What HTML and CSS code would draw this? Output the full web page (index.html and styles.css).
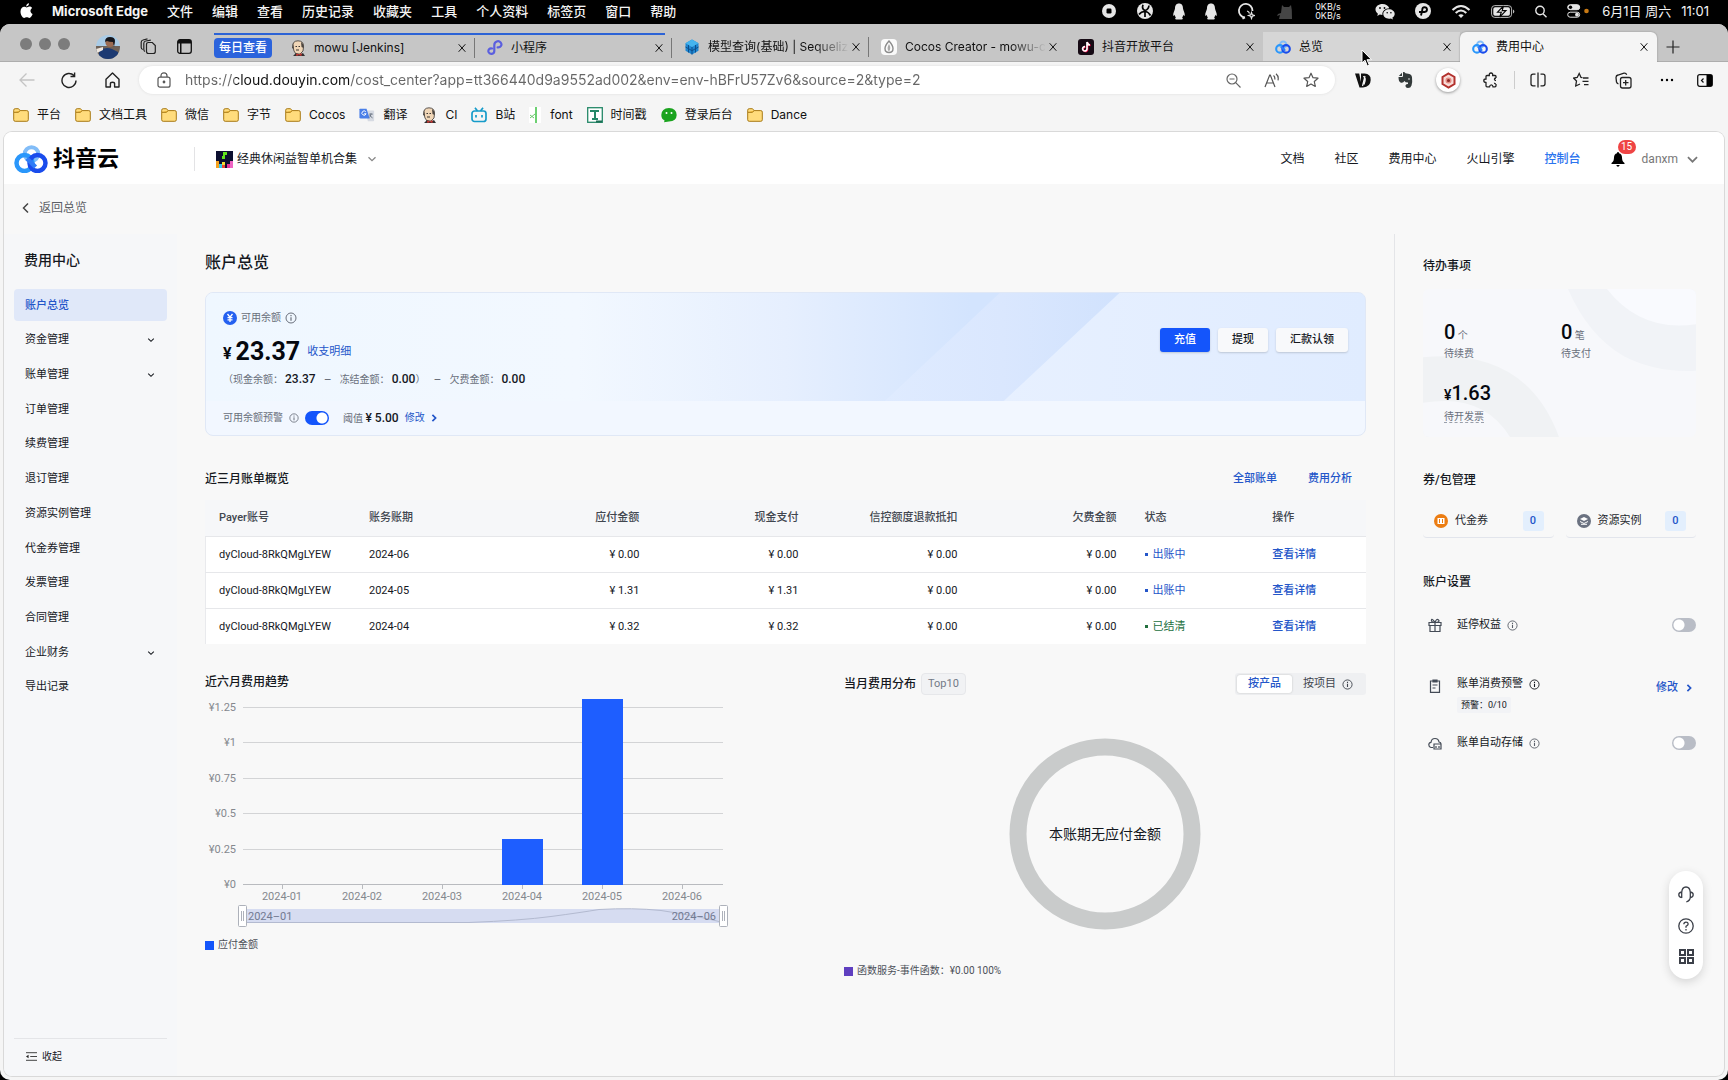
FILE: index.html
```html
<!DOCTYPE html>
<html lang="zh-CN">
<head>
<meta charset="utf-8">
<title>费用中心</title>
<link rel="stylesheet" href="styles.css">
</head>
<body>
<svg class="sprite" aria-hidden="true">
  <symbol id="close" viewBox="0 0 12 12"><path d="M2 1.5l8 9M10 1.5l-8 9" stroke="#111" stroke-width="1.2" fill="none"/></symbol>
  <symbol id="folder" viewBox="0 0 16 16"><path d="M.7 3.2Q.7 1.7 2.2 1.7h3.3l1.6 1.9h6.7q1.5 0 1.5 1.5v7.7q0 1.5-1.5 1.5H2.2q-1.5 0-1.5-1.5z" fill="#ffdc7c" stroke="#a87a16"/><path d="M1 5.3h4.3l1.8-1.6" fill="#f5b92c" stroke="#a87a16"/></symbol>
  <symbol id="info" viewBox="0 0 12 12"><circle cx="6" cy="6" r="5" fill="none" stroke="currentColor"/><path d="M6 5.2v3.6M6 3.1v1.2" stroke="currentColor" stroke-width="1.2"/></symbol>
  <symbol id="down" viewBox="0 0 10 10"><path d="M1.5 3.2L5 6.7l3.5-3.5" fill="none" stroke="currentColor" stroke-width="1.3"/></symbol>
  <symbol id="right" viewBox="0 0 10 10"><path d="M3.4 1.8L6.6 5 3.4 8.2" fill="none" stroke="currentColor" stroke-width="1.7"/></symbol>
  <symbol id="rings" viewBox="0 0 34 28"><circle cx="17.500" cy="9" r="6.800" fill="none" stroke="#82bdf8" stroke-width="4"/><circle cx="10.500" cy="18" r="8" fill="none" stroke="#2a97fb" stroke-width="4.500"/><circle cx="23.500" cy="18" r="8" fill="none" stroke="#1a4cec" stroke-width="4.500"/><path d="M13 13.500l8.500 8.500" stroke="#2f7bf6" stroke-width="4.500"/></symbol>
  <symbol id="butler" viewBox="0 0 16 16"><path d="M3 7Q2 1 8 .8q6 .2 5.500 6.200L13 11l-3 3H6l-2-3z" fill="#f0d6b7" stroke="#3a3531" stroke-width=".8"/><path d="M11 2q3 2 2.500 6l-2-1zM3 3L2 8l2 1z" fill="#4b4540"/><path d="M5.500 6.500h1.500M8.500 6.500H10M6 10h3" stroke="#3a3531"/><path d="M3 16l3-3 4 1.500 3-1.500 2 3z" fill="#303030"/><path d="M6 13.500l3 1 2.500-1.500v3L9 15l-2.500 1z" fill="#d33833"/></symbol>
  <symbol id="penguin" viewBox="0 0 12 17"><path d="M6 .5c3 0 4 2.200 4 5 .2 2 2 4 1.800 7-.8.600-1-.2-1.500-.8-.2 1.500-.8 2.300-1.200 2.800.900.600 1.200 2-.500 2H3.400c-1.700 0-1.400-1.400-.5-2-.4-.5-1-1.300-1.200-2.800-.5.600-.7 1.400-1.500.8C0 9.500 1.800 7.500 2 5.500c0-2.800 1-5 4-5z" fill="#e6e6e6"/></symbol>
</svg>

<header class="menubar">
  <nav class="mac-menu" aria-label="应用菜单">
    <svg width="13" height="16" viewBox="0 0 13 16"><path d="M9 .3c.1 1.700-1.300 3.200-2.800 3.100C6.100 1.900 7.500.500 9 .3zM6.600 4.400c.8 0 1.500-.8 2.800-.8 1 0 2 .5 2.700 1.400-2.400 1.500-2 4.900.5 5.900-.5 1.500-1.900 4-3.200 4-1 0-1.400-.6-2.600-.6s-1.700.6-2.600.6C2.600 14.900.500 11.700.500 8.400c0-3 1.900-4.700 3.700-4.700 1 0 1.900.7 2.400.7z" fill="#fff"/></svg>
    <b>Microsoft Edge</b><span>文件</span><span>编辑</span><span>查看</span><span>历史记录</span><span>收藏夹</span><span>工具</span><span>个人资料</span><span>标签页</span><span>窗口</span><span>帮助</span>
  </nav>
  <div class="mac-status">
    <svg width="16" height="16" viewBox="0 0 16 16"><circle cx="8" cy="8" r="7" fill="#e6e6e6"/><rect x="5.500" y="5.500" width="5" height="5" rx="1.200" fill="#000"/></svg>
    <svg width="16" height="16" viewBox="0 0 16 16"><circle cx="8" cy="8" r="8" fill="#e6e6e6"/><path d="M8 7.500Q4.500 6 6 1.800M8 7.500q3.500-1 4-5M8 8.500Q4 8.500 2 11.500M8.500 8.500q3 .5 5 4M8 8v6" stroke="#000" stroke-width="1.700" fill="none"/></svg>
    <svg width="12" height="17"><use href="#penguin"/></svg>
    <svg width="12" height="17"><use href="#penguin"/></svg>
    <svg width="18" height="18" viewBox="0 0 18 18" fill="none" stroke="#e6e6e6" stroke-width="1.800"><path d="M8 15.500A6.800 6.800 0 1 1 15.500 9M8 15.500l-2.500 1.200"/><path d="M10 9q2 .5 2.500 2.500M14.500 10.500l.8 2.200 2.200.8-2.200.8-.8 2.200-.8-2.200-2.200-.8 2.200-.8z" stroke-width="1.200"/></svg>
    <svg width="20" height="17" viewBox="0 0 20 17"><path d="M7 2l2 2h5l2-2 .8 5L17 16H4l1-4-3 1 1-2 3-1z" fill="#454545"/></svg>
    <span class="net">0KB/s<br>0KB/s</span>
    <svg class="wechat" width="20" height="17" viewBox="0 0 20 17" fill="#e6e6e6"><path d="M7.500 1C3.500 1 .5 3.400.5 6.500c0 1.700.900 3.200 2.400 4.200L2.300 13l2.500-1.400c.9.2 1.800.3 2.600.3C7 8 10 5.300 14.300 5.200 13.500 2.700 10.800 1 7.500 1z"/><path d="M19.700 11c0-2.600-2.600-4.700-5.700-4.700S8.300 8.400 8.300 11s2.600 4.700 5.700 4.700c.7 0 1.300-.1 1.900-.3l2 1.100-.5-1.900c1.400-.8 2.300-2.100 2.300-3.600z"/><g fill="#000"><circle cx="5" cy="5" r=".9"/><circle cx="9.500" cy="5" r=".9"/><circle cx="12.200" cy="9.700" r=".8"/><circle cx="15.900" cy="9.700" r=".8"/></g></svg>
    <svg width="16" height="16" viewBox="0 0 16 16"><circle cx="8" cy="8" r="8" fill="#e6e6e6"/><path d="M4 9h5.500q2.500-.3 2.500-2.500Q11.800 4.300 9.500 4.300T7.300 7L6 12.500" stroke="#000" stroke-width="1.900" fill="none"/></svg>
    <svg width="20" height="15" viewBox="0 0 20 15" fill="none" stroke="#e6e6e6" stroke-width="2.100"><path d="M1.500 6q8.500-8 17 0M4.700 9q5.300-5 10.600 0"/><path d="M10 14l-2.700-2.800q2.700-2 5.400 0z" fill="#e6e6e6" stroke="none"/></svg>
    <svg width="24" height="13" viewBox="0 0 24 13"><rect x=".6" y=".6" width="20" height="11.800" rx="3.200" fill="none" stroke="#bbb"/><path d="M22 4.500v4q1.300-.5 1.300-2t-1.300-2z" fill="#bbb"/><rect x="2.300" y="2.300" width="16.600" height="8.400" rx="1.800" fill="#e6e6e6"/><path d="M12.500 1L6.500 7.200h3.800L8.700 12 15 5.600h-3.800z" fill="#e6e6e6" stroke="#000" stroke-width="1.100"/></svg>
    <svg width="12" height="13" viewBox="0 0 12 13" fill="none" stroke="#e6e6e6" stroke-width="1.400"><circle cx="5" cy="5.500" r="4.200"/><path d="M8 8.700l3.500 3.600"/></svg>
    <svg width="22" height="14" viewBox="0 0 22 14"><rect x=".7" y=".7" width="12" height="5" rx="2.500" fill="#e6e6e6" stroke="#e6e6e6"/><circle cx="3.500" cy="3.200" r="1.700" fill="#000"/><rect x=".7" y="8.200" width="12" height="5" rx="2.500" fill="none" stroke="#e6e6e6"/><circle cx="10" cy="10.700" r="1.900" fill="#e6e6e6"/><circle cx="19.500" cy="7" r="2.300" fill="#c97a14"/></svg>
    <time><span>6月1日 周六</span><span>11:01</span></time>
  </div>
</header>

<div class="window">
  <div class="tabstrip">
    <div class="lights"><i></i><i></i><i></i></div>
    <div class="strip-tools">
      <svg width="24" height="24" viewBox="0 0 24 24"><defs><clipPath id="face"><circle cx="12" cy="12" r="12"/></clipPath></defs><g clip-path="url(#face)"><path d="M0 0h24v24H0z" fill="#a9cbe6"/><path d="M0 11h24v13H0z" fill="#6f6258"/><path d="M3 16q6-5 13-2l6 3v8H3z" fill="#1c3a72"/><circle cx="14" cy="7.500" r="4.600" fill="#9a6b52"/><path d="M9 7Q9 2 14 2t5 4l-1 6-1-5q-4 0-6-1z" fill="#15161c"/><path d="M0 14l7-2v3l-6 3z" fill="#efe7df"/></g></svg>
      <svg width="17" height="17" viewBox="0 0 17 17" fill="none" stroke="#222" stroke-width="1.200"><path d="M8.500 4.500h3.800l3 3v6q0 2-2 2H8.500q-2 0-2-2v-7q0-2 2-2z"/><path d="M5 13.500Q3.800 13 3.800 11.500V5.300q0-2 2-2.300l5-.8M2.800 11.500Q1.300 11 1.200 9.500V4.300Q1.300 2.400 3 2L7.500.8"/></svg>
      <svg width="15" height="15" viewBox="0 0 15 15"><rect x=".7" y=".7" width="13.600" height="13.600" rx="2.300" fill="none" stroke="#111" stroke-width="1.300"/><path d="M1 1h13v3.500H4.500V14H3V4.500H1z" fill="#111"/></svg>
    </div>
    <div class="tabs">
      <div class="tab-group">
        <button class="chip">每日查看</button>
        <div class="tab"><svg width="16" height="16"><use href="#butler"/></svg><span>mowu [Jenkins]</span><button aria-label="关闭"><svg width="10" height="10"><use href="#close"/></svg></button></div>
        <div class="tab"><svg width="16" height="16" viewBox="0 0 16 16"><path d="M5 8.500C2.500 7.700.8 10 1.600 12.200 2.600 14.700 7.300 14.500 7.300 11V5c0-3.700 4.300-4.800 6.300-2.600 2 2.500 0 5.300-3 4.900" fill="none" stroke="#5b5fdf" stroke-width="2.200" stroke-linecap="round"/></svg><span>小程序</span><button aria-label="关闭"><svg width="10" height="10"><use href="#close"/></svg></button></div>
      </div>
      <div class="tab"><svg width="16" height="16" viewBox="0 0 16 16"><path d="M8 .5l6.500 3.800v7.400L8 15.500 1.500 11.700V4.300z" fill="#1f86d0"/><path d="M8 .5l6.500 3.800L8 8 1.500 4.300z" fill="#45b4ee"/><path d="M8 8v7.500M4.500 6v7.500M11.500 6v7.500M1.500 8L8 11.700 14.500 8" stroke="#0d4f8c" fill="none"/></svg><span class="fade">模型查询(基础) | Sequeliz</span><button aria-label="关闭"><svg width="10" height="10"><use href="#close"/></svg></button></div>
      <div class="tab last"><svg width="16" height="16" viewBox="0 0 16 16"><rect width="16" height="16" rx="4" fill="#fafafa"/><path d="M8 2q4 4.500 4 7.500 0 4-4 4t-4-4Q4 6.500 8 2z" fill="none" stroke="#8b8b8b" stroke-width="1.400"/><path d="M8 5q-3 5 0 7.500Q10.500 9 8 5z" fill="#aaa"/></svg><span class="fade">Cocos Creator - mowu-c</span><button aria-label="关闭"><svg width="10" height="10"><use href="#close"/></svg></button></div>
      <div class="tab last"><svg width="16" height="16" viewBox="0 0 16 16"><rect width="16" height="16" rx="3" fill="#160a14"/><path d="M9 3v6.800a2.200 2.200 0 1 1-2-2.200M9 3q.5 2.700 3 3" fill="none" stroke="#f04" stroke-width="1.600" transform="translate(.6 .5)"/><path d="M9 3v6.800a2.200 2.200 0 1 1-2-2.200M9 3q.5 2.700 3 3" fill="none" stroke="#fff" stroke-width="1.700"/></svg><span>抖音开放平台</span><button aria-label="关闭"><svg width="10" height="10"><use href="#close"/></svg></button></div>
      <div class="tab hover"><svg width="16" height="16"><use href="#rings"/></svg><span>总览</span><button aria-label="关闭"><svg width="10" height="10"><use href="#close"/></svg></button></div>
      <div class="tab active"><svg width="16" height="16"><use href="#rings"/></svg><span>费用中心</span><button aria-label="关闭"><svg width="10" height="10"><use href="#close"/></svg></button></div>
    </div>
    <button class="new-tab" aria-label="新建标签页"><svg width="14" height="14" viewBox="0 0 14 14"><path d="M7 .5v13M.5 7h13" stroke="#222" stroke-width="1.200"/></svg></button>
  </div>

  <div class="toolbar">
    <div class="nav-buttons">
      <button aria-label="后退"><svg width="16" height="16" viewBox="0 0 16 16" fill="none" stroke="#c4c4c4" stroke-width="1.300"><path d="M15.500 8H1M7.500 1.500L1 8l6.500 6.500"/></svg></button>
      <button aria-label="刷新"><svg width="16" height="17" viewBox="0 0 16 17" fill="none" stroke="#222" stroke-width="1.400"><path d="M15 8.500A7 7 0 1 1 13 3.600M13.600.5v4H9.500"/></svg></button>
      <button aria-label="主页"><svg width="15" height="16" viewBox="0 0 15 16" fill="none" stroke="#222" stroke-width="1.400"><path d="M1 7.200L7.500 1 14 7.200V15H9.600v-3.500q0-1.300-2.100-1.300t-2.100 1.300V15H1z" stroke-linejoin="round"/></svg></button>
    </div>
    <div class="address">
      <svg width="14" height="16" viewBox="0 0 14 16" fill="none" stroke="#555" stroke-width="1.200"><rect x="1" y="5.200" width="12" height="10" rx="2"/><path d="M4 5V3.800Q4 .8 7 .8t3 3V5"/><circle cx="7" cy="10" r=".8" fill="#555"/></svg>
      <input type="text" aria-label="地址栏" value="https://cloud.douyin.com/cost_center?app=tt366440d9a9552ad002&amp;env=env-hBFrU57Zv6&amp;source=2&amp;type=2">
      <svg width="15" height="15" viewBox="0 0 15 15" fill="none" stroke="#666" stroke-width="1.200"><circle cx="6" cy="6" r="5"/><path d="M9.700 9.700l4.800 4.800M3.500 6h5"/></svg>
      <svg width="16" height="15" viewBox="0 0 16 15" fill="none" stroke="#555" stroke-width="1.200"><path d="M1 14L5.700 2h.6L11 14M2.700 10h6.600M9.500 2.500q1.800 1.500 1.200 4M12 .8q3 2.500 2 6.500"/></svg>
      <svg width="16" height="16" viewBox="0 0 16 16" fill="none" stroke="#555" stroke-width="1.200"><path d="M8 1.200l2 4.500 5 .5-3.700 3.300 1 4.900L8 11.900l-4.300 2.500 1-4.900L1 6.200l5-.5z" stroke-linejoin="round"/></svg>
    </div>
    <div class="extensions">
      <button aria-label="扩展 VD"><svg width="16" height="15" viewBox="0 0 16 15"><path d="M0 .5h4.200L6 9V.5h3.500Q16 1 15.700 7 15.500 14 8 14.500H4.500z" fill="#111"/><path d="M10 3L7.500 13M8 3.500q4 .5 1 8" stroke="#f5f5f5" stroke-width="1.200" fill="none"/></svg></button>
      <button aria-label="印象笔记"><svg width="15" height="16" viewBox="0 0 15 16"><path d="M5 0q2 0 2.500 1.200l4 .8q2 .3 2.500 3 .6 5-.5 8.500-.8 2.500-3.500 2.500-2.800-.2-2.500-2.700Q8 12 10 12v-1.500Q7 10.500 6.500 9 5 11.500 2.500 10.500.5 9.500.5 5H4q1 0 1-1z" fill="#333a3a"/><path d="M.8 4L4 .7V4z" fill="#333a3a"/><circle cx="11" cy="7" r=".8" fill="#f5f5f5"/></svg></button>
      <button class="round" aria-label="扩展"><svg width="15" height="17" viewBox="0 0 15 17"><path d="M7.500 1.500l6 3.500v7l-6 3.500-6-3.500V5z" fill="#f7dcd8" stroke="#b3322e" stroke-width="2"/><circle cx="7.500" cy="8.500" r="2.300" fill="#8e2a28" stroke="#e58c83" stroke-width="1.500"/></svg></button>
      <button aria-label="扩展"><svg width="16" height="17" viewBox="0 0 16 17" fill="none" stroke="#222" stroke-width="1.300"><path d="M13 6V4.500q0-1-1-1H9.700Q10 1 8 1T6.300 3.500H4q-1 0-1 1V7Q.8 7 .8 8.700T3 10.500v3.300q0 1 1 1h2.500q.3-2 1.800-2t1.700 2H12q1 0 1-1V12M13 6q-1.600.2-1.600 1.300T13 8.600M13 12q-1.600-.2-1.600-1.300"/></svg></button>
      <hr>
      <button aria-label="分屏"><svg width="16" height="16" viewBox="0 0 16 16" fill="none" stroke="#222" stroke-width="1.300"><path d="M8 .5v15M5.500 2.200H3q-2 0-2 2v7.600q0 2 2 2h2.500M10.500 2.200H13q2 0 2 2v7.600q0 2-2 2h-2.500"/></svg></button>
      <button aria-label="收藏夹"><svg width="16" height="16" viewBox="0 0 16 16" fill="none" stroke="#222" stroke-width="1.300"><path d="M9.500 5.700L8 5.500 6.200 1.500l-2 4-3.700.5 3 3-.8 5L7 12M10 6h5.500M9.500 9.300h6M11 12.600h4.500"/></svg></button>
      <button aria-label="集锦"><svg width="17" height="17" viewBox="0 0 17 17" fill="none" stroke="#222" stroke-width="1.300"><rect x="5.500" y="5.500" width="10.500" height="10.500" rx="2"/><path d="M10.700 8v5.500M8 10.700h5.500M3.500 12Q2 11.500 1.500 10L1 5.500Q1 3.500 3 3l6-1.800q2-.3 2.700 1.500"/></svg></button>
      <button aria-label="更多"><svg width="14" height="4" viewBox="0 0 14 4"><circle cx="2" cy="2" r="1.200"/><circle cx="7" cy="2" r="1.200"/><circle cx="12" cy="2" r="1.200"/></svg></button>
      <button aria-label="侧边栏"><svg width="16" height="13" viewBox="0 0 16 13"><rect x=".7" y=".7" width="14.600" height="11.600" rx="2" fill="none" stroke="#111" stroke-width="1.300"/><path d="M9.500 1H15v11H9.500z"/><path d="M6.500 4.500l-2 2 2 2" fill="none" stroke="#111" stroke-width="1.200"/></svg></button>
    </div>
  </div>

  <nav class="bookmarks" aria-label="书签">
    <a href="#"><svg width="16" height="16"><use href="#folder"/></svg>平台</a>
    <a href="#"><svg width="16" height="16"><use href="#folder"/></svg>文档工具</a>
    <a href="#"><svg width="16" height="16"><use href="#folder"/></svg>微信</a>
    <a href="#"><svg width="16" height="16"><use href="#folder"/></svg>字节</a>
    <a href="#"><svg width="16" height="16"><use href="#folder"/></svg>Cocos</a>
    <a href="#"><svg width="16" height="16" viewBox="0 0 18 16"><path d="M7 3h9q1 0 1 1v10q0 1-1 1h-6z" fill="#d6dae2"/><path d="M1 1h7.500l3.500 11H2q-1.500 0-1.500-1.500V1.500z" fill="#4a7fe8"/><path d="M7.600 4.300A2.400 2.400 0 1 0 8 6.600H5.800" stroke="#fff" fill="none" stroke-width="1.100"/><path d="M11.500 7h4M13.500 6v1q-.5 3-2.300 4M12 8q1 2 3.300 3.300" stroke="#66707e" fill="none"/></svg>翻译</a>
    <a href="#"><svg width="16" height="16"><use href="#butler"/></svg>CI</a>
    <a href="#"><svg width="16" height="16" viewBox="0 0 16 16" fill="none" stroke="#159bc9" stroke-width="1.700"><rect x="1" y="4" width="14" height="10.500" rx="2.500"/><path d="M4 .8L6.500 4M12 .8L9.500 4M5 8v2.500M11 8v2.500"/></svg>B站</a>
    <a href="#"><svg width="13" height="16" viewBox="0 0 13 16"><path d="M0 0h12v16H0z" fill="#fff"/><path d="M7 0v16" stroke="#3cc043" stroke-width="1.500"/><path d="M1 8l4 3M1 11l5-4" stroke="#69c96b"/></svg>font</a>
    <a href="#"><svg width="16" height="16" viewBox="0 0 16 16"><rect x=".7" y=".7" width="14.600" height="14.600" fill="#fff" stroke="#258868" stroke-width="1.300"/><path d="M3 4h9M8 4v8M5 12h6" stroke="#258868" stroke-width="2"/><path d="M9 13.500h6v2H9z" fill="#1a6e54"/></svg>时间戳</a>
    <a href="#"><svg width="16" height="16" viewBox="0 0 16 16"><path d="M8 1q7.500.3 7.700 7Q15.500 14 8 14.500l-5 .8.600-1.800Q.3 12 .3 8 .5 1.300 8 1z" fill="#1aa31e"/><circle cx="5.500" cy="6" r="1" fill="#fff"/><circle cx="10.500" cy="6" r="1" fill="#fff"/></svg>登录后台</a>
    <a href="#"><svg width="16" height="16"><use href="#folder"/></svg>Dance</a>
  </nav>

  <div class="page">
    <header class="site-header">
      <a class="logo" href="#"><svg width="34" height="28"><use href="#rings"/></svg>抖音云</a>
      <button class="app-switch"><svg width="17" height="17" viewBox="0 0 17 17"><path d="M0 0h17v17H0z" fill="#0d1030"/><path d="M7 1h4v3H9v4H6V5h1z" fill="#61e51c"/><path d="M0 10h3v7H0z" fill="#f5a11f"/><path d="M3 13h3v4H3z" fill="#32c9ef"/><path d="M6 11h3v3H6z" fill="#f3dd31"/><path d="M6 14h3v3H6z" fill="#e94a38"/><path d="M11 13h3v4h-3z" fill="#e8349b"/><path d="M14 10h3v7h-3z" fill="#ef65c4"/></svg>经典休闲益智单机合集<svg class="chev" width="10" height="10"><use href="#down"/></svg></button>
      <nav class="site-nav">
        <a href="#">文档</a><a href="#">社区</a><a href="#">费用中心</a><a href="#">火山引擎</a><a class="on" href="#">控制台</a>
        <button class="bell" aria-label="通知"><svg width="14" height="15" viewBox="0 0 14 15"><path d="M7 0q1 0 1 1.200 3 .8 3 4.300 0 4 2.500 5.500V12H.5v-1Q3 9.500 3 5.500 3 2 6 1.200 6 0 7 0zM5.300 13h3.400q-.4 1.700-1.700 1.700T5.300 13z"/></svg><span class="badge">15</span></button>
      </nav>
      <button class="user">danxm<svg width="13" height="13"><use href="#down"/></svg></button>
    </header>
    <a class="back" href="#"><svg width="10" height="12" viewBox="0 0 10 12"><path d="M7 1.500L2.500 6 7 10.500" fill="none" stroke="#444" stroke-width="1.500"/></svg>返回总览</a>

    <div class="columns">
      <aside class="sidebar">
        <h2>费用中心</h2>
        <nav>
          <a class="on" href="#">账户总览</a>
          <a href="#">资金管理<svg width="8" height="8"><use href="#down"/></svg></a>
          <a href="#">账单管理<svg width="8" height="8"><use href="#down"/></svg></a>
          <a href="#">订单管理</a>
          <a href="#">续费管理</a>
          <a href="#">退订管理</a>
          <a href="#">资源实例管理</a>
          <a href="#">代金券管理</a>
          <a href="#">发票管理</a>
          <a href="#">合同管理</a>
          <a href="#">企业财务<svg width="8" height="8"><use href="#down"/></svg></a>
          <a href="#">导出记录</a>
        </nav>
        <button class="collapse"><svg width="11" height="9" viewBox="0 0 13 10" fill="none" stroke="#222"><path d="M0 .5h13M5 5h8M0 9.500h13"/><path d="M0 5l3-2v4z" fill="#222" stroke="none"/></svg>收起</button>
      </aside>

      <main>
        <h1>账户总览</h1>
        <section class="balance">
          <div class="hero">
            <svg class="stripes" viewBox="0 0 1161 108" preserveAspectRatio="none">
              <defs>
                <linearGradient id="sky"><stop offset="0" stop-color="#eff7ff"/><stop offset=".32" stop-color="#f2f8ff"/><stop offset=".5" stop-color="#e6effe"/><stop offset=".66" stop-color="#d3e4fe"/></linearGradient>
                <linearGradient id="beam"><stop offset="0" stop-color="#dfebff"/><stop offset=".5" stop-color="#dae7fe"/><stop offset="1" stop-color="#d1e2fd"/></linearGradient>
                <linearGradient id="wash"><stop offset="0" stop-color="#e7f0ff"/><stop offset="1" stop-color="#e0ecff"/></linearGradient>
              </defs>
              <path d="M0 0h1161v108H0z" fill="url(#sky)"/>
              <path d="M795 0h120L799 108H680z" fill="url(#beam)"/>
              <path d="M915 0h246v108H799z" fill="url(#wash)"/>
            </svg>
            <div class="figures">
              <p class="caption"><svg width="14" height="14" viewBox="0 0 14 14"><circle cx="7" cy="7" r="7" fill="#2460f0"/><path d="M4.500 3L7 6.200 9.500 3M7 6v5M4.500 6.700h5M4.500 8.800h5" fill="none" stroke="#fff" stroke-width="1.300"/></svg>可用余额<svg width="12" height="12"><use href="#info"/></svg></p>
              <p class="amount"><small>¥</small><strong>23.37</strong><a href="#">收支明细</a></p>
              <p class="split"><span>（现金余额：<b>23.37</b></span><i>–</i><span>冻结金额：<b>0.00</b>）</span><i>–</i><span>欠费金额：<b>0.00</b></span></p>
            </div>
            <div class="actions"><button class="primary">充值</button><button>提现</button><button>汇款认领</button></div>
          </div>
          <div class="alert-row">
            <label for="warn">可用余额预警</label><svg width="10" height="10" viewBox="0 0 12 12"><use href="#info"/></svg><input class="switch" id="warn" type="checkbox" checked>
            <span class="limit">阈值 <b>¥ 5.00</b></span><a href="#">修改<svg width="10" height="10"><use href="#right"/></svg></a>
          </div>
        </section>

        <div class="bills-head"><h2>近三月账单概览</h2><a href="#">全部账单</a><a href="#">费用分析</a></div>
        <table>
          <colgroup><col class="c1"><col class="c2"><col class="c3"><col class="c3"><col class="c3"><col class="c3"><col class="c4"><col></colgroup>
          <thead><tr><th>Payer账号</th><th>账务账期</th><th class="num">应付金额</th><th class="num">现金支付</th><th class="num">信控额度退款抵扣</th><th class="num">欠费金额</th><th>状态</th><th>操作</th></tr></thead>
          <tbody>
            <tr><td>dyCloud-8RkQMgLYEW</td><td>2024-06</td><td class="num">¥ 0.00</td><td class="num">¥ 0.00</td><td class="num">¥ 0.00</td><td class="num">¥ 0.00</td><td><span class="state">出账中</span></td><td><a href="#">查看详情</a></td></tr>
            <tr><td>dyCloud-8RkQMgLYEW</td><td>2024-05</td><td class="num">¥ 1.31</td><td class="num">¥ 1.31</td><td class="num">¥ 0.00</td><td class="num">¥ 0.00</td><td><span class="state">出账中</span></td><td><a href="#">查看详情</a></td></tr>
            <tr><td>dyCloud-8RkQMgLYEW</td><td>2024-04</td><td class="num">¥ 0.32</td><td class="num">¥ 0.32</td><td class="num">¥ 0.00</td><td class="num">¥ 0.00</td><td><span class="state done">已结清</span></td><td><a href="#">查看详情</a></td></tr>
          </tbody>
        </table>

        <div class="charts">
          <section class="trend">
            <h2>近六月费用趋势</h2>
            <svg viewBox="0 0 522 240">
              <path d="M38 16.500h480M38 51.500h480M38 87.500h480M38 122.500h480M38 158.500h480" stroke="#d3d4d6"/>
              <path d="M38 193.500h480M77.500 194v4M157.500 194v4M237.500 194v4M317.500 194v4M397.500 194v4M477.500 194v4" stroke="#b9bbbf"/>
              <path d="M297 148h41v46h-41zM377 8h41v186h-41z" fill="#1e5eff"/>
              <g class="axis" text-anchor="end"><text x="31" y="20">¥1.25</text><text x="31" y="55">¥1</text><text x="31" y="91">¥0.75</text><text x="31" y="126">¥0.5</text><text x="31" y="162">¥0.25</text><text x="31" y="197">¥0</text></g>
              <g class="axis" text-anchor="middle"><text x="77" y="209">2024-01</text><text x="157" y="209">2024-02</text><text x="237" y="209">2024-03</text><text x="317" y="209">2024-04</text><text x="397" y="209">2024-05</text><text x="477" y="209">2024-06</text></g>
              <path d="M38 218h480v14H38z" fill="#d6dcf1"/>
              <path d="M38 231.500h226q52-2 82-6t48-7q34-2 62 1 40 6 62 12" fill="none" stroke="#b3bad0"/>
              <g class="range"><text x="43" y="229">2024–01</text><text x="511" y="229" text-anchor="end">2024–06</text></g>
              <g fill="#fff" stroke="#adb1ba"><rect x="33.500" y="214.500" width="8" height="21" rx="1"/><rect x="514.500" y="214.500" width="8" height="21" rx="1"/><path d="M36.500 220v10M38.500 220v10M517.500 220v10M519.500 220v10"/></g>
            </svg>
            <p class="legend">应付金额</p>
          </section>
          <section class="share">
            <div class="share-head"><h2>当月费用分布</h2><span class="top">Top10</span>
              <div class="segment"><button class="on">按产品</button><button>按项目<svg width="11" height="11"><use href="#info"/></svg></button></div>
            </div>
            <svg viewBox="0 0 522 192"><circle cx="261" cy="96" r="87" fill="none" stroke="#c9cbcb" stroke-width="17"/><text x="261" y="101" text-anchor="middle">本账期无应付金额</text></svg>
            <p class="legend violet">函数服务-事件函数：¥0.00 100%</p>
          </section>
        </div>
      </main>

      <aside class="rail">
        <h2>待办事项</h2>
        <div class="todo">
          <svg viewBox="0 0 273 143" preserveAspectRatio="none"><path d="M0 0h273v143H0z" fill="#f7f8fb"/><path d="M145 0h128v79q-40 2-72-14Q165 45 145 0z" fill="#f1f3f7"/><path d="M184 0h89v34q-55 8-89-34z" fill="#f9fafe"/><path d="M0 66q103-10 136 77H0z" fill="#f0f2f4"/><path d="M0 110q60-10 87 33H0z" fill="#f7f8fb"/></svg>
          <p><strong>0</strong> 个<span>待续费</span></p>
          <p><strong>0</strong> 笔<span>待支付</span></p>
          <p><strong><small>¥</small>1.63</strong><span><u>待开发票</u></span></p>
        </div>
        <h2>券/包管理</h2>
        <div class="packs">
          <a href="#"><svg width="14" height="14" viewBox="0 0 14 14"><circle cx="7" cy="7" r="7" fill="#ec7d13"/><path d="M3.500 4H10.500v6h-7z" fill="#fff"/><path d="M5.500 5v4M8.500 5v4" stroke="#ec7d13"/></svg>代金券<b>0</b></a>
          <a href="#"><svg width="14" height="14" viewBox="0 0 14 14"><circle cx="7" cy="7" r="7" fill="#6b7281"/><path d="M7 3l4 2-4 2-4-2z" fill="#fff"/><path d="M3 7.500l4 2 4-2M4 10.300h6" fill="none" stroke="#fff"/></svg>资源实例<b>0</b></a>
        </div>
        <h2>账户设置</h2>
        <ul class="settings">
          <li>
            <svg width="14" height="14" viewBox="0 0 14 14" fill="none" stroke="#444b56" stroke-width="1.200"><path d="M1 4.500h12v3H1zM2 7.500h10v6H2zM7 4.500v9M7 4.500Q3 4 3.500 2T7 4.500Q8.500 0 10.500 2T7 4.500"/></svg>
            <label for="delay">延停权益</label><svg width="11" height="11"><use href="#info"/></svg><input class="switch" id="delay" type="checkbox">
          </li>
          <li class="tall">
            <svg width="14" height="14" viewBox="0 0 14 14" fill="none" stroke="#444b56" stroke-width="1.200"><path d="M2.500 2h9v11.400h-9zM5 1h4v2H5zM4.500 6h5M4.500 9h3"/></svg>
            <div class="warning"><span>账单消费预警<svg width="11" height="11"><use href="#info"/></svg></span><small>预警：0/10</small></div>
            <a href="#">修改<svg width="10" height="10"><use href="#right"/></svg></a>
          </li>
          <li>
            <svg width="14" height="14" viewBox="0 0 14 14" fill="none" stroke="#444b56" stroke-width="1.200"><path d="M5 11.500H3Q.8 11 .8 8.800T3 6.300Q3.500 2.500 7 2.500T11 6q2 .2 2 2M6 8h7v5H6zM8 10v2M11 10v2"/></svg>
            <label for="store">账单自动存储</label><svg width="11" height="11"><use href="#info"/></svg><input class="switch" id="store" type="checkbox">
          </li>
        </ul>
      </aside>
    </div>
    <div class="float">
      <button aria-label="客服"><svg width="16" height="17" viewBox="0 0 16 17" fill="none" stroke="#3c4049" stroke-width="1.300"><path d="M3.700 12V6.500Q4 1 8 1t4.300 5.500V11q0 3.500-4 5M3.500 6Q.8 6.500.8 8.700T3.500 11.500M12.500 6q2.700.5 2.700 2.700t-2.700 2.800"/></svg></button>
      <button aria-label="帮助"><svg width="16" height="16" viewBox="0 0 16 16" fill="none" stroke="#3c4049" stroke-width="1.300"><circle cx="8" cy="8" r="7.200"/><path d="M5.800 6.300Q6 4.200 8 4.200T10.200 6Q10.200 7.300 8 8.300v1.500M8 11v1.500"/></svg></button>
      <button aria-label="应用"><svg width="15" height="15" viewBox="0 0 15 15" fill="none" stroke="#3c4049" stroke-width="2"><path d="M1 1h5v5H1zM9 1h5v5H9zM1 9h5v5H1zM9 9h5v5H9z"/></svg></button>
    </div>
  </div>
  <svg class="cursor" width="12" height="18" viewBox="0 0 12 18"><path d="M1 1v13l3-2.800L6.300 17l2-.9L6 10.700h4.500z" fill="#000" stroke="#fff"/></svg>
</div>
</body>
</html>
```

FILE: styles.css
```css
* { box-sizing: border-box; }
body, h1, h2, p, ul { margin: 0; padding: 0; }
body {
  min-height: 100vh;
  display: flex;
  flex-direction: column;
  background: #000;
  color: #15181e;
  font: 11px/16px Roboto, "Noto Sans CJK SC", sans-serif;
}
svg { flex: none; display: block; }
a { color: #2456c9; text-decoration: none; }
button { border: 0; padding: 0; background: none; font: inherit; color: inherit; display: flex; align-items: center; justify-content: center; }
.sprite { position: absolute; width: 0; height: 0; }

/* system menu bar */
.menubar, .tabstrip, .toolbar, .bookmarks { font-family: Inter, "Noto Sans CJK SC", sans-serif; }
.menubar { height: 24px; display: flex; align-items: center; justify-content: space-between; padding: 0 19px 2px 20px; color: #f4f4f4; font-size: 13px; }
.mac-menu, .mac-status { display: flex; align-items: center; gap: 19px; white-space: nowrap; }
.mac-menu { font-weight: 500; }
.mac-menu b { font-weight: 700; }
.mac-status { gap: 20px; }
.net { font-size: 9px; line-height: 9px; width: 26px; }
.wechat { margin-left: 14px; }
.mac-status time { display: flex; gap: 10px; margin-left: -7px; }

/* browser window */
.window { flex: 1; position: relative; display: flex; flex-direction: column; background: #f5f5f5; border-radius: 10px; overflow: hidden; }
.tabstrip { height: 38px; display: flex; background: #c6c6c6; border-bottom: 1px solid #adadad; }
.lights { display: flex; gap: 7px; padding: 14px 0 0 20px; width: 96px; }
.lights i { width: 12px; height: 12px; border-radius: 6px; background: #7c7c7c; }
.strip-tools { display: flex; align-items: center; gap: 20px; width: 118px; padding-top: 8px; }
.tabs { display: grid; grid-template-columns: minmax(0, 458fr) repeat(5, minmax(0, 197fr)); flex: 1; max-width: 1443px; }
.tab-group { display: flex; margin-top: 9px; border-top: 2px solid #2c63d6; margin-right: 7px; }
.chip { height: 20px; margin: 3px 6px 0 0; padding: 0 5px; border-radius: 4px; background: #2b63dc; color: #fff; font-size: 12px; font-weight: 500; white-space: nowrap; }
.tab { min-width: 0; display: flex; align-items: center; gap: 8px; padding: 0 8px 0 12px; margin-top: 8px; font-size: 12px; color: #111; }
.tab > span { flex: 1; margin-right: -6px; overflow: hidden; white-space: nowrap; }
.tab .fade { mask-image: linear-gradient(90deg, #000 75%, transparent); }
.tab-group .tab { flex: 1; margin: 0; height: 26px; }
.tab-group .tab, .tab:nth-child(2) { background: linear-gradient(#777, #777) right center / 1px 20px no-repeat; }
.tab-group .tab:last-child { margin-right: -7px; }
.hover { background: #d6d6d6; }
.active { background: #f5f5f5; border-radius: 6px 6px 0 0; margin-bottom: -1px; box-shadow: 0 0 2px #888; clip-path: inset(-2px -2px 0 -2px); }
.new-tab { width: 32px; padding-top: 8px; }
.cursor { position: absolute; left: 1361px; top: 25px; }

.toolbar { display: flex; align-items: center; padding: 4px 6px 5px; }
.nav-buttons { display: flex; }
.nav-buttons button { width: 42px; }
.nav-buttons button:last-child { width: 44px; }
.address { flex: 1; height: 28px; display: flex; align-items: center; gap: 23px; padding: 0 16px 0 18px; margin-left: 5px; border-radius: 14px; background: #fff; box-shadow: 0 0 3px #ddd; }
.address input { flex: 1; min-width: 0; margin-left: -9px; padding: 0; border: 0; outline: 0; font: inherit; font-size: 14px; line-height: 20px; color: transparent; background: linear-gradient(90deg, #666 50px, #111 50px 164px, #666 164px); -webkit-background-clip: text; background-clip: text; }
.extensions { display: flex; align-items: center; padding-left: 6px; }
.extensions button { width: 43px; height: 28px; }
.extensions button:last-child { width: 34px; }
.extensions hr { width: 1px; height: 18px; margin: 0 1px 0 2px; border: 0; background: #ccc; }
.extensions .round { width: 24px; height: 24px; margin: 0 9px; border-radius: 12px; background: #fff; box-shadow: 0 1px 3px #999; }

.bookmarks { display: flex; align-items: center; gap: 14px; height: 33px; padding: 0 13px 2px; font-size: 12px; }
.bookmarks a { display: flex; align-items: center; gap: 8px; color: #111; white-space: nowrap; }

/* web page */
.page { flex: 1; position: relative; display: flex; flex-direction: column; margin: 0 4px 4px; background: #f8f8f8; border-radius: 8px; overflow: hidden; box-shadow: 0 0 0 1px #d9d9d9; }
.site-header { display: flex; align-items: center; height: 52px; padding: 2px 25px 0 10px; background: #fff; font-size: 12px; }
.logo { display: flex; align-items: center; gap: 5px; width: 181px; height: 24px; border-right: 1px solid #e3e3e5; color: #000; font-size: 22px; font-weight: 700; }
.app-switch { margin-left: 21px; gap: 4px; white-space: nowrap; }
.chev { margin-left: 6px; color: #888; }
.site-nav { display: flex; align-items: center; gap: 30px; margin-left: auto; }
.site-nav a { color: #15181e; }
.site-nav .on { color: #2b74ee; font-weight: 500; }
.bell { position: relative; }
.badge { position: absolute; left: 7px; top: -12px; width: 18px; height: 14px; border-radius: 7px; background: #ef4444; color: #fff; font-size: 10px; line-height: 14px; text-align: center; }
.user { margin-left: 17px; gap: 8px; color: #777; }
.back { display: flex; align-items: center; gap: 8px; height: 50px; padding: 0 14px 2px 17px; color: #5c5f66; font-size: 12px; }

.columns { flex: 1; display: flex; }
.sidebar { width: 173px; display: flex; flex-direction: column; padding: 16px 10px 0; background: #f6f7f9; }
.sidebar h2 { padding-left: 10px; font-size: 14px; line-height: 20px; font-weight: 500; }
.sidebar nav { display: grid; align-content: space-between; height: 414px; margin-top: 19px; }
.sidebar nav a { display: flex; align-items: center; justify-content: space-between; height: 32px; padding: 1px 12px 0 11px; border-radius: 4px; color: #15181e; }
.sidebar nav .on { background: #e0e8f9; color: #2456c9; font-weight: 500; }
.collapse { justify-content: flex-start; gap: 5px; height: 38px; margin-top: auto; padding: 0 0 2px 12px; border-top: 1px solid #e4e5e8; font-size: 10px; }

main { flex: 1; min-width: 0; padding: 17px 28px 0; }
h1 { font-size: 16px; line-height: 24px; font-weight: 500; margin-bottom: 17px; }
main h2, .rail h2 { font-size: 12px; line-height: 20px; font-weight: 500; }
.balance { border: 1px solid #e0e8f6; border-radius: 8px; overflow: hidden; background: #f2f7ff; }
.hero { position: relative; display: flex; justify-content: space-between; height: 108px; padding: 17px 17px 0; }
.stripes { position: absolute; inset: 0; width: 100%; height: 100%; }
.figures, .actions { position: relative; }
.caption, .amount, .split, .alert-row { display: flex; align-items: center; font-size: 10px; color: #696f7b; white-space: nowrap; }
.caption { gap: 4px; }
.amount { height: 32px; margin: 10px 0 3px; color: #05080f; }
.amount small { font-size: 16px; font-weight: 700; padding: 4px 4px 0 0; }
.amount strong { font-size: 25px; font-weight: 700; }
.amount a { margin-left: 7px; font-size: 11px; }
.split b, .alert-row b { color: #15181e; font-size: 12px; font-weight: 500; }
.split b { margin-left: 2px; }
.split i { width: 24px; text-align: center; font-size: 12px; }
.actions { display: flex; gap: 8px; padding-top: 18px; }
.actions button { height: 24px; padding: 0 14px; border-radius: 3px; background: #f8f9fb; box-shadow: 0 1px 2px #bcc6d6; font-weight: 500; }
.actions .primary { background: #1455fb; color: #fff; }
.alert-row { height: 34px; padding: 0 17px; gap: 6px; }
.alert-row .limit { margin-left: 8px; }
.alert-row a { display: flex; align-items: center; gap: 4px; }
.switch { appearance: none; width: 24px; height: 14px; margin: 0; border-radius: 7px; background: radial-gradient(circle at 7px 50%, #fff 5px, #b9bdc6 6px); }
.switch:checked { background: radial-gradient(circle at 17px 50%, #fff 5px, #1455fb 6px); }

.bills-head { display: flex; align-items: center; gap: 31px; margin: 33px 14px 11px 0; }
.bills-head h2 { margin-right: auto; }
.bills-head a, td a { font-weight: 500; }
table { width: 100%; table-layout: fixed; border-collapse: collapse; background: #fff; box-shadow: inset 1px 0 #e9eaed; }
.c1 { width: 150px; } .c2 { width: 12%; } .c3 { width: 13.7%; } .c4 { width: 11%; }
th, td { height: 36px; padding: 1px 14px 0; text-align: left; white-space: nowrap; border-bottom: 1px solid #e6e7ea; }
th { background: #f6f7f9; color: #41464f; font-weight: 500; }
tbody tr:last-child td { border-bottom: 0; }
.num { text-align: right; }
.state { color: #2456c9; }
.state::before { content: ""; display: inline-block; width: 3px; height: 3px; margin-right: 5px; vertical-align: 2px; background: currentColor; }
.done { color: #23703f; }

.charts { display: grid; grid-template-columns: 1fr 1fr; gap: 117px; margin-top: 29px; }
.charts > section > svg { width: 100%; overflow: visible; }
.trend h2 { line-height: 18px; }
.axis { font-size: 11px; fill: #85888e; }
.range { font-size: 11px; font-family: Roboto, sans-serif; fill: #727a91; }
.legend { display: flex; align-items: center; gap: 4px; margin-top: 7px; font-size: 10px; line-height: 14px; color: #4c5058; }
.legend::before { content: ""; width: 9px; height: 9px; background: #1455fb; }
.violet { margin-top: 34px; }
.violet::before { background: #5f3fc0; }
.share-head { display: flex; align-items: center; height: 22px; margin-bottom: 43px; }
.top { margin-left: 5px; padding: 2px 6px; border: 1px solid #e6e7ea; border-radius: 4px; background: #f1f2f4; color: #737a87; }
.segment { display: flex; margin-left: auto; padding: 2px; border-radius: 3px; background: #eff0f2; }
.segment button { height: 18px; padding: 0 11px; gap: 6px; border-radius: 3px; color: #41464f; }
.segment .on { background: #fff; box-shadow: 0 0 2px #bbb; color: #2456c9; font-weight: 500; }
.share text { font-size: 14px; fill: #15181e; }

/* right rail */
.rail { width: 330px; padding: 22px 28px 0; border-left: 1px solid #e4e5e8; }
.todo { position: relative; display: grid; grid-template-columns: 117px 1fr; align-content: start; gap: 19px 0; height: 148px; margin: 13px 0 33px; padding: 31px 21px 0; border-radius: 6px; overflow: hidden; }
.todo svg { position: absolute; inset: 0; width: 100%; height: 100%; }
.todo p { position: relative; font-size: 10px; color: #696f7b; line-height: 16px; }
.todo strong { font-size: 20px; line-height: 24px; font-weight: 500; color: #05080f; }
.todo small { font-size: 14px; }
.todo p > span { display: block; margin-top: 2px; }
.todo u { text-decoration: none; border-bottom: 1px dashed #9aa0ab; }
.packs { display: grid; grid-template-columns: 1fr 1fr; gap: 12px; margin: 14px 0 34px; }
.packs a { display: flex; align-items: center; gap: 7px; height: 34px; padding: 0 10px 0 11px; border-radius: 4px; border-bottom: 1px solid #e2e5ec; color: #25282e; }
.packs b { width: 21px; margin-left: auto; border-radius: 3px; background: #e3effd; color: #2456c9; line-height: 20px; text-align: center; font-weight: 500; }
.settings { list-style: none; margin-top: 20px; }
.settings li { display: flex; align-items: center; height: 26px; padding-left: 5px; }
.settings li > svg:first-child { margin-right: 15px; }
.settings li > svg:nth-of-type(2) { margin-left: 6px; color: #5a5f69; }
.settings .switch { margin-left: auto; }
.settings .tall { align-items: flex-start; height: 40px; margin: 36px 0 16px; }
.tall > svg { margin-top: 5px; }
.warning span { display: flex; align-items: center; gap: 6px; line-height: 20px; }
.warning small { display: table; margin-top: 3px; padding: 0 4px; border-radius: 2px; background: #f2f3f6; font-size: 9px; }
.settings a { display: flex; align-items: center; gap: 6px; margin: 6px 0 0 auto; padding-right: 2px; font-weight: 500; }

.float { position: absolute; right: 21px; bottom: 97px; display: flex; flex-direction: column; justify-content: space-between; width: 34px; height: 108px; padding: 15px 0; border-radius: 17px; background: #fff; box-shadow: 0 3px 10px #d4d4d4; }
```
